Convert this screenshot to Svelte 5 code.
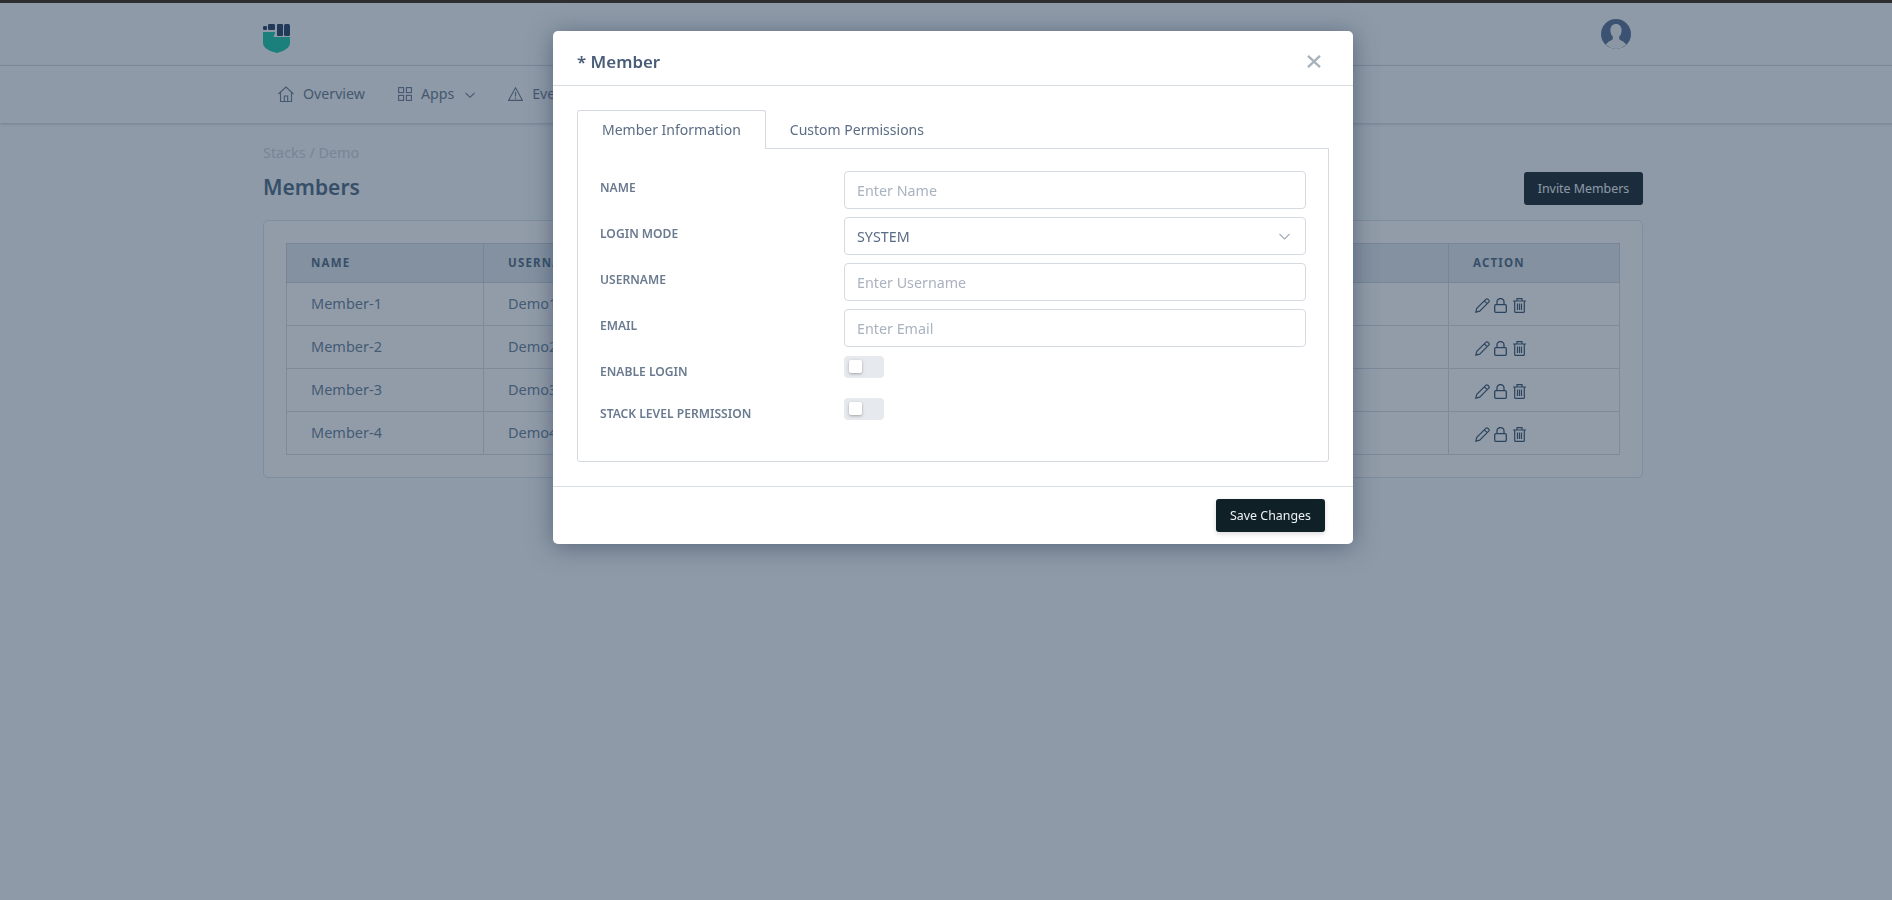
<script>
    const members = [
        { name: "Member-1", username: "Demo1" },
        { name: "Member-2", username: "Demo2" },
        { name: "Member-3", username: "Demo3" },
        { name: "Member-4", username: "Demo4" }
    ];

    const fields = [
        { label: "NAME", placeholder: "Enter Name" },
        { label: "LOGIN MODE", value: "SYSTEM" },
        { label: "USERNAME", placeholder: "Enter Username" },
        { label: "EMAIL", placeholder: "Enter Email" }
    ];

    const toggles = ["ENABLE LOGIN", "STACK LEVEL PERMISSION"];
</script>

<div class="topstrip"></div>

<div class="root">
    <header class="header">
        <div class="wrap header-row">
            <svg class="logo" width="27" height="30" viewBox="0 0 27 30">
                <path d="M0 9H11.500C12 9 12.200 9.500 12 10L10.500 14H27V20C27 25 20 28.500 14 30 7 28.500 0 25 0 20z" fill="#10c4a6"/>
                <rect x="0" y="3" width="4" height="4" rx="1.200" fill="#1f3a62"/>
                <rect x="5" y="1" width="7" height="6" rx="1.200" fill="#1f3a62"/>
                <rect x="14" y="1" width="6" height="12" rx="1" fill="#1f3a62"/>
                <rect x="21" y="1" width="6" height="12" rx="1.500" fill="#1f3a62"/>
            </svg>
            <svg class="avatar" width="30" height="30" viewBox="0 0 30 30">
                <circle cx="15" cy="15" r="15" fill="#506a94"/>
                <path d="M15 5c3.600 0 5.600 2.700 5.600 6.200 0 2.600-1 5-2.400 6.400v2.200c0 1 1.600 1.600 4 2.600l3 3.200A15 15 0 0 1 15 30a15 15 0 0 1-10.200-4.400l3-3.200c2.400-1 4-1.600 4-2.600v-2.200c-1.400-1.400-2.400-3.800-2.400-6.400C9.400 7.700 11.400 5 15 5z" fill="#f2f5f7"/>
            </svg>
        </div>
    </header>

    <nav class="nav">
        <div class="wrap nav-row">
            <span class="nav-item">
                <svg width="16" height="16" viewBox="0 0 16 16" fill="none" stroke="currentColor" stroke-width="1.100">
                    <path d="M.5 8 8 1 15.500 8M2.500 6.500V15.500H13.500V6.500M6.300 15.500V10H9.700V15.500"/>
                </svg>
                Overview
            </span>
            <span class="nav-item">
                <svg width="14" height="14" viewBox="0 0 14 14" fill="none" stroke="currentColor" stroke-width="1.100">
                    <rect x=".6" y=".6" width="5" height="5"/><rect x="8.400" y=".6" width="5" height="5"/>
                    <rect x=".6" y="8.400" width="5" height="5"/><rect x="8.400" y="8.400" width="5" height="5"/>
                </svg>
                Apps
                <svg class="caret" width="10" height="6" viewBox="0 0 10 6" fill="none" stroke="currentColor" stroke-width="1.100"><path d="m.5.8 4.500 4.500L9.500.8"/></svg>
            </span>
            <span class="nav-item">
                <svg width="15" height="14" viewBox="0 0 15 14" fill="none" stroke="currentColor" stroke-width="1.100">
                    <path d="M7.500.8 14.500 13.400H.5zM7.500 5V9.500M7.500 10.500V12"/>
                </svg>
                Events
            </span>
        </div>
    </nav>

    <main class="wrap page">
        <div class="crumb">Stacks / Demo</div>
        <div class="title-row">
            <h1>Members</h1>
            <button class="invite">Invite Members</button>
        </div>
        <div class="card">
            <table>
                <thead>
                    <tr>
                        <th class="c-name">NAME</th>
                        <th class="c-user">USERNAME</th>
                        <th>EMAIL</th>
                        <th class="c-action">ACTION</th>
                    </tr>
                </thead>
                <tbody>
                    {#each members as m}
                        <tr>
                            <td>{m.name}</td>
                            <td>{m.username}</td>
                            <td></td>
                            <td class="action-cell">
                                <div class="actions">
                                    <svg width="15" height="15" viewBox="0 0 15 15" fill="none" stroke="currentColor" stroke-width="1.200"><path d="M.8 14.200 1.800 10.300 10.800 1.300a1.500 1.500 0 0 1 2.100 0l.8.8a1.500 1.500 0 0 1 0 2.100l-9 9zM9.300 2.800l2.900 2.900"/></svg>
                                    <svg width="13" height="15" viewBox="0 0 13 15" fill="none" stroke="currentColor" stroke-width="1.300"><rect x=".7" y="6.700" width="11.600" height="7.600" rx="1"/><path d="M3 6.700V4a3.500 3.500 0 0 1 7 0v2.700"/></svg>
                                    <svg class="trash" width="13" height="15" viewBox="0 0 13 15" fill="none" stroke="currentColor" stroke-width="1.200"><path d="M0 3H13M4 3V.7H9V3M1.700 3V13.400a1 1 0 0 0 1 1H10.300a1 1 0 0 0 1-1V3M4.500 5.500V12M6.500 5.500V12M8.500 5.500V12"/></svg>
                                </div>
                            </td>
                        </tr>
                    {/each}
                </tbody>
            </table>
        </div>
    </main>
</div>

<div class="overlay"></div>

<div class="modal-wrap">
    <div class="modal">
        <div class="modal-head">
            <h2>* Member</h2>
            <svg width="14" height="13" viewBox="0 0 14 13" fill="none" stroke="#a9b1bd" stroke-width="2.300"><path d="M1 .8l12 11.400M13 .8 1 12.200"/></svg>
        </div>
        <div class="modal-body">
            <div class="tabs">
                <span class="tab active">Member Information</span>
                <span class="tab">Custom Permissions</span>
            </div>
            <div class="tab-pane">
                {#each fields as f}
                    <div class="row">
                        <div class="lbl">{f.label}</div>
                        {#if f.value}
                            <div class="control select">
                                {f.value}
                                <svg width="11" height="7" viewBox="0 0 11 7" fill="none" stroke="#a5adba" stroke-width="1.200"><path d="m.5 1 5 5 5-5"/></svg>
                            </div>
                        {:else}
                            <input class="control" placeholder={f.placeholder} />
                        {/if}
                    </div>
                {/each}
                {#each toggles as t}
                    <div class="row toggle-row">
                        <div class="lbl">{t}</div>
                        <div class="toggle"><span class="knob"></span></div>
                    </div>
                {/each}
            </div>
        </div>
        <div class="modal-foot">
            <button class="save">Save Changes</button>
        </div>
    </div>
</div>

<style>
    :global(body) {
        background: #f7fafc;
        font-family: "Noto Sans", "Liberation Sans", sans-serif;
        color: #64768e;
        min-height: 900px;
        overflow: hidden;
    }

    .topstrip {
        height: 3px;
        background: #2e2e2e;
        position: relative;
        z-index: 2;
    }

    .root {
        width: 1906px;
    }

    .wrap {
        width: 1380px;
        margin: 0 auto;
        box-sizing: border-box;
    }

    .header {
        height: 62px;
        border-bottom: 1px solid #d6dce3;
    }

    .header-row {
        display: flex;
        justify-content: space-between;
        padding-top: 20px;
    }

    .logo {
        display: block;
    }

    .avatar {
        display: block;
        margin: -4px 12px 0 0;
    }

    .nav {
        height: 57px;
        box-shadow: 0 1px 3px rgba(40, 60, 90, 0.25);
    }

    .nav-row {
        display: flex;
        gap: 33px;
        padding: 0 15px 2px;
        height: 100%;
        align-items: center;
        font-size: 14.200px;
    }

    .nav-item {
        display: flex;
        align-items: center;
        gap: 9px;
    }

    .caret {
        margin-left: 2px;
        margin-top: 2px;
    }

    .page {
        padding-top: 21px;
    }

    .crumb {
        font-size: 14.400px;
        color: #c8d2dc;
        line-height: 18px;
    }

    .title-row {
        display: flex;
        justify-content: space-between;
        align-items: center;
        margin-top: 9px;
        height: 34px;
    }

    h1 {
        font-size: 21px;
        font-weight: 600;
        margin: 0 0 2px;
        color: #486581;
    }

    .invite {
        height: 33px;
        width: 119px;
        border: 0;
        border-radius: 3px;
        background: #102027;
        color: #f0f4f8;
        font: inherit;
        font-size: 12.400px;
        padding: 0;
    }

    .card {
        margin-top: 15px;
        background: #fff;
        border: 1px solid #d9e0e7;
        border-radius: 5px;
        padding: 22px;
    }

    table {
        width: 100%;
        border-collapse: collapse;
        font-size: 14.500px;
    }

    th {
        background: #e2e8ee;
        height: 36px;
        text-align: left;
        padding: 0 24px 2px;
        font-size: 11.500px;
        font-weight: 700;
        letter-spacing: 1.200px;
        color: #486581;
        border: 1px solid #c8d1db;
    }

    td {
        height: 40px;
        padding: 0 24px 2px;
        border: 1px solid #d3dae2;
        color: #627d98;
    }

    .action-cell {
        height: 42px;
        padding-bottom: 0;
    }

    .c-name,
    .c-user {
        width: 148px;
    }

    .c-action {
        width: 122px;
    }

    .actions {
        display: flex;
        gap: 4px;
        margin: 2px 0 0 2px;
        color: #334e68;
    }

    .trash {
        margin-left: 2px;
    }

    .overlay {
        position: fixed;
        inset: 0;
        background: rgba(38, 58, 82, 0.5);
    }

    .modal-wrap {
        position: fixed;
        top: 0;
        left: 0;
        bottom: 0;
        width: 1906px;
        display: flex;
        justify-content: center;
        padding-top: 31px;
        box-sizing: border-box;
    }

    .modal {
        width: 800px;
        height: 513px;
        background: #fff;
        border-radius: 5px;
        box-shadow: 0 3px 25px rgba(36, 56, 86, 0.5);
        display: flex;
        flex-direction: column;
    }

    .modal-head {
        height: 47px;
        padding: 7px 32px 0 24px;
        flex: none;
        border-bottom: 1px solid #d8dde3;
        display: flex;
        align-items: center;
        justify-content: space-between;
    }

    h2 {
        font-size: 16.900px;
        font-weight: 600;
        margin: 0;
        color: #4a5d78;
    }

    .modal-body {
        flex: 1;
        padding: 24px 24px 0;
    }

    .tabs {
        display: flex;
        height: 39px;
        margin-bottom: -1px;
        position: relative;
        font-size: 14px;
    }

    .tab {
        padding: 0 24px 2px;
        display: flex;
        align-items: center;
        color: #5b6d85;
        border-top: 1px solid transparent;
    }

    .tab.active {
        border: 1px solid #d5d9e1;
        border-bottom: 0;
        border-radius: 3px 3px 0 0;
        background: #fff;
    }

    .tab-pane {
        height: 314px;
        box-sizing: border-box;
        border: 1px solid #d5d9e1;
        border-radius: 0 0 3px 3px;
        padding: 22px 22px 0;
    }

    .row {
        display: flex;
        height: 38px;
        margin-bottom: 8px;
    }

    .toggle-row {
        height: 22px;
        margin-bottom: 20px;
    }

    .lbl {
        width: 244px;
        flex: none;
        font-size: 12.100px;
        font-weight: 600;
        color: #6a7a8f;
        padding-top: 9px;
        line-height: 16px;
    }

    .control {
        flex: 1;
        height: 38px;
        box-sizing: border-box;
        border: 1px solid #d5d9e1;
        border-radius: 4px;
        padding: 0 12px;
        font: inherit;
        font-size: 14.300px;
        color: #5b6d85;
        outline: none;
        background: #fff;
    }

    .control::placeholder {
        color: #a9b2bf;
    }

    .select {
        display: flex;
        align-items: center;
        justify-content: space-between;
        padding-right: 15px;
    }

    .toggle {
        width: 40px;
        height: 22px;
        margin-top: 1px;
        background: #e6e9ed;
        border-radius: 4px;
        position: relative;
    }

    .knob {
        position: absolute;
        left: 5px;
        top: 4px;
        width: 13px;
        height: 13px;
        border-radius: 2px;
        background: #fff;
        box-shadow: 0 1px 3px rgba(0, 0, 0, 0.3);
    }

    .modal-foot {
        height: 57px;
        flex: none;
        border-top: 1px solid #d8dde3;
        display: flex;
        align-items: center;
        justify-content: flex-end;
        padding: 0 28px;
    }

    .save {
        width: 109px;
        height: 33px;
        border: 0;
        border-radius: 3px;
        background: #102027;
        color: #eef1f4;
        font: inherit;
        font-size: 12.400px;
        padding: 0;
        box-shadow: 0 2px 5px rgba(0, 0, 0, 0.15);
    }
</style>
